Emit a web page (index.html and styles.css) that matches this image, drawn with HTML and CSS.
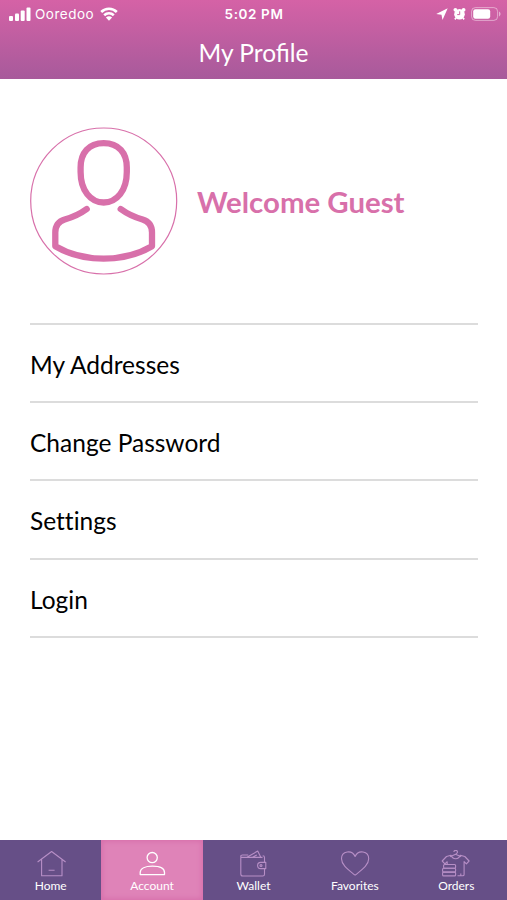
FILE: index.html
```html
<!DOCTYPE html>
<html lang="en">
<head>
  <meta charset="UTF-8">
  <meta name="viewport" content="width=device-width, initial-scale=1.0">
  <title>My Profile</title>
  <link rel="stylesheet" href="styles.css">
</head>
<body>
  <header class="header">
    <div class="status-bar">
      <div class="status-left">
        <svg class="signal" width="22" height="14" viewBox="0 0 22 14">
          <rect x="0" y="9" width="4" height="5" rx="1" />
          <rect x="6" y="6.5" width="4" height="7.5" rx="1" />
          <rect x="11.700" y="3.500" width="4" height="10.500" rx="1" />
          <rect x="17.500" y="0.500" width="4" height="13.500" rx="1" />
        </svg>
        <span class="carrier">Ooredoo</span>
        <svg class="wifi" width="18" height="14" viewBox="0 0 18 14">
          <path d="M1.200 5C5.500 .6 12.500 .6 16.800 5M4.200 8.200c2.700-2.600 6.900-2.600 9.600 0" />
          <path class="dot" d="M5.900 10.400c1.800-1.500 4.400-1.500 6.200 0L9 13.700z" />
        </svg>
      </div>
      <span class="time">5:02 PM</span>
      <div class="status-right">
        <svg width="12" height="12" viewBox="0 0 12 12">
          <path d="M11.700.3L6.500 12 5.500 6.700.2 5.900z" />
        </svg>
        <svg class="alarm" width="13" height="14" viewBox="0 0 13 14">
          <circle cx="6.500" cy="7.200" r="5.300" />
          <circle cx="2.400" cy="2.800" r="1.900" />
          <circle cx="10.600" cy="2.800" r="1.900" />
          <path class="legs" d="M3.200 10.800l-1.400 1.600M9.800 10.800l1.400 1.600" />
          <path class="hands" d="M6.700 4.300v3.300H4.200" />
        </svg>
        <svg class="battery" width="30" height="14" viewBox="0 0 30 14">
          <rect class="shell" x="0.600" y="0.600" width="26" height="12.800" rx="3.800" />
          <rect x="2.200" y="2.300" width="17" height="9.400" rx="2.200" />
          <path class="cap" d="M28 4.600c2 .8 2 4 0 4.800z" />
        </svg>
      </div>
    </div>
    <h1>My Profile</h1>
  </header>

  <main>
    <section class="profile">
      <svg class="avatar" width="148" height="148" viewBox="0 0 148 148">
        <circle cx="73.700" cy="74" r="73" />
        <path d="M73.700 16.200c-15 0-23.100 9.800-23.100 24.300v4.500c0 18.500 9.900 30.500 23.100 30.500s23.100-12 23.100-30.500v-4.500c0-14.500-8.100-24.300-23.100-24.300z" />
        <path d="M56.700 82c-6.500 4.800-14 8.200-22 10.500-6.500 2-9.400 6.500-9.400 13v13.800c28 16.500 68.700 16.500 96.700 0v-13.800c0-6.500-2.900-11-9.400-13-8-2.300-15.400-5.700-21.900-10.500" />
      </svg>
      <h2>Welcome Guest</h2>
    </section>

    <ul class="menu">
      <li>My Addresses</li>
      <li>Change Password</li>
      <li>Settings</li>
      <li>Login</li>
    </ul>
  </main>

  <nav class="tabs">
    <a class="tab">
      <svg width="30" height="28" viewBox="0 0 30 28">
        <path d="M1.600 12l14-10.500 14 10.500M5.600 9.200v16.500H26V9.200M12.600 20.300h6" />
      </svg>
      <span>Home</span>
    </a>
    <a class="tab active">
      <svg width="30" height="28" viewBox="0 0 30 28">
        <circle cx="15.200" cy="7.600" r="5.100" />
        <path d="M3.200 24.600v-2C3.200 18.200 8.500 16.200 15.400 16.200s12.100 2 12.100 6.400v2z" />
      </svg>
      <span>Account</span>
    </a>
    <a class="tab">
      <svg width="30" height="28" viewBox="0 0 30 28">
        <path d="M26.500 12.300V7.600c0-1.200-.6-1.800-1.800-1.800M8.500 7.400h-4C2.200 7.400 2.200 5 4.500 5h5.700M2.800 6v18c0 1.300.7 2 2 2h19.900c1.200 0 1.800-.7 1.800-1.800v-5.500M8.500 7.400l11.200-6.300 3.200 6.300M14 7.400l4.800-2.400M8.500 7.400h16" />
        <path d="M27.800 12.400h-5.100a3.100 3.100 0 0 0 0 6.200h5.100z" />
        <circle cx="23" cy="15.500" r="1" />
      </svg>
      <span>Wallet</span>
    </a>
    <a class="tab">
      <svg width="30" height="28" viewBox="0 0 30 28">
        <path d="M15.100 25.200C9.500 20.500 1.500 15.500 1.500 8.800c0-8 10.500-9.500 13.600-2.300 3.100-7.200 13.600-5.700 13.600 2.300 0 6.700-8 11.700-13.600 16.400z" />
      </svg>
      <span>Favorites</span>
    </a>
    <a class="tab">
      <svg width="30" height="28" viewBox="0 0 30 28">
        <path d="M12.900 2c0-2.200 3.600-2.200 3.600 0 0 1.400-1.900 1.300-1.900 3.100M9 6.700l5.600-2.500 5.600 2.500" />
        <path d="M6.200 14.500v-2.800l-2.300 2.100L1.200 11l4.300-4.500L10 5.200c1.500 4.700 7.800 4.700 9.300 0l4.500 1.300 4.300 4.500-2.700 2.800-2.300-2.100v12.700c0 .8-.5 1.300-1.300 1.300h-5.300M19.800 25.700v-2.300" />
        <rect x="2.600" y="14.500" width="12" height="3.800" rx="1" />
        <rect x="1.600" y="18.300" width="13" height="3.800" rx="1" />
        <rect x="1.600" y="22.100" width="13" height="3.800" rx="1" />
      </svg>
      <span>Orders</span>
    </a>
  </nav>
</body>
</html>
```

FILE: styles.css
```css
* {
  box-sizing: border-box;
}

body {
  font-family: Lato, sans-serif;
  display: flex;
  flex-direction: column;
  height: 100vh;
  margin: 0;
  background: #fff;
  color: #111;
}

.header {
  height: 79px;
  background: linear-gradient(to bottom, #d562a6, #a75a9b);
  color: #fff;
  text-align: center;
}

.status-bar {
  display: grid;
  grid-template-columns: 1fr auto 1fr;
  align-items: center;
  height: 27px;
  padding: 0 8px 0 9px;
  font-family: Inter, sans-serif;
  font-size: 13px;
}

.status-bar svg {
  fill: #fff;
}

.status-left, .status-right {
  display: flex;
  align-items: center;
}

.carrier {
  margin: 0 6px 0 4px;
  font-size: 13.5px;
  letter-spacing: 0.5px;
}

.wifi path {
  fill: none;
  stroke: #fff;
  stroke-width: 2.6;
}

.wifi .dot {
  fill: #fff;
  stroke: none;
}

.time {
  font-size: 13.5px;
  font-weight: 600;
  letter-spacing: 0.6px;
}

.status-right {
  justify-content: flex-end;
  gap: 5px;
  margin-right: -2px;
}

.alarm .legs, .alarm .hands {
  fill: none;
  stroke: #fff;
  stroke-width: 1.6;
}

.alarm .hands {
  stroke: #d062a4;
  stroke-width: 1;
}

.battery .shell {
  fill: none;
  stroke: rgba(255, 255, 255, 0.45);
}

.battery .cap {
  fill: rgba(255, 255, 255, 0.5);
}

h1 {
  margin: 0;
  font-size: 24.5px;
  font-weight: 400;
  line-height: 52px;
}

main {
  flex: 1;
  padding: 48px 29px 0 30px;
}

.profile {
  display: flex;
  align-items: center;
  gap: 19px;
  height: 148px;
  margin-bottom: 48px;
}

.avatar {
  fill: none;
  stroke: #d870aa;
  stroke-width: 6.3;
  stroke-linecap: round;
  stroke-linejoin: round;
}

.avatar circle {
  stroke-width: 1.2;
}

h2 {
  margin: 0;
  color: #d870aa;
  font-size: 29.4px;
  font-weight: 700;
}

.menu {
  margin: 0;
  padding: 0;
  list-style: none;
  border-top: 2px solid #dcdcdc;
}

.menu li {
  height: 78.2px;
  border-bottom: 2px solid #dcdcdc;
  color: #000;
  font-size: 24.5px;
  font-variant-ligatures: none;
  line-height: 80px;
}

.tabs {
  display: grid;
  grid-template-columns: repeat(5, 1fr);
  height: 60px;
  background: #664f87;
}

.tab {
  display: flex;
  flex-direction: column;
  align-items: center;
  padding-top: 10px;
  color: #fff;
  font-size: 12px;
  line-height: 16px;
}

.tab svg {
  fill: none;
  stroke: #b78fc6;
  stroke-width: 1.1;
  stroke-linejoin: round;
}

.tab.active {
  background: #df83b8;
  box-shadow: inset 0 0 4px 2px #d872ad;
}

.tab.active svg {
  stroke: #fff;
  stroke-width: 1.3;
}
```
